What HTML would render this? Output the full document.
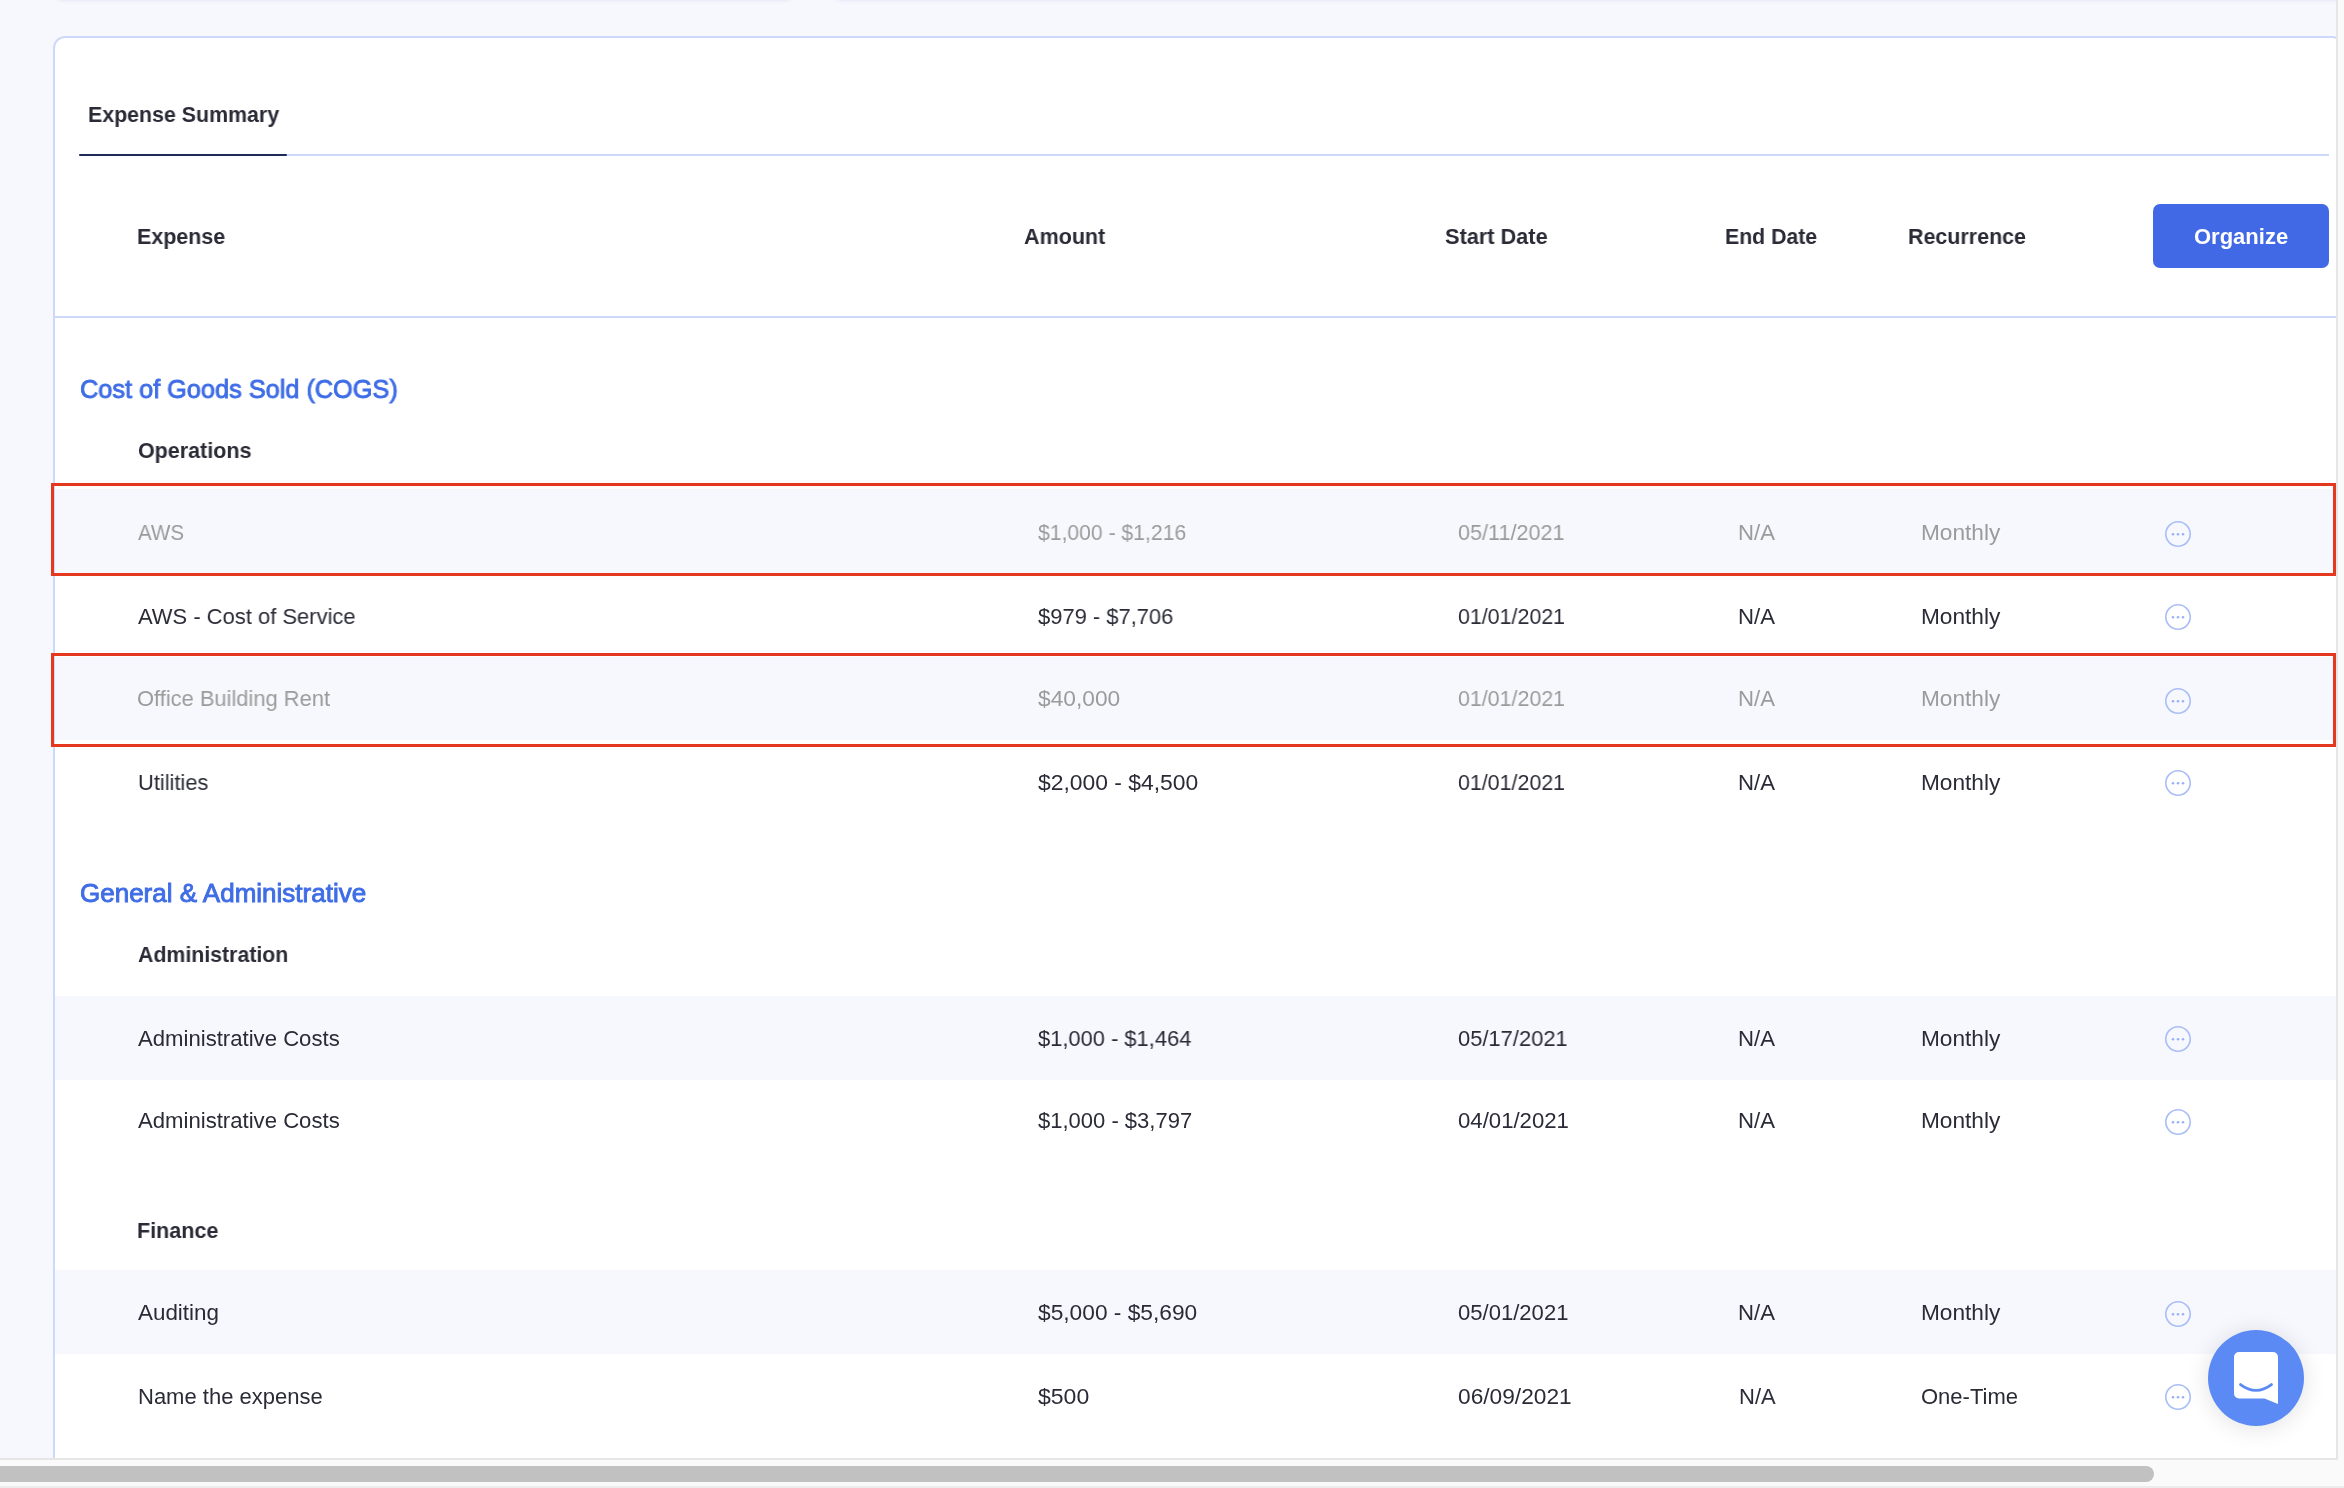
<!DOCTYPE html>
<html><head><meta charset="utf-8"><title>Expense Summary</title>
<style>
html,body{margin:0;padding:0;overflow:hidden}
body{width:2344px;height:1488px;overflow:hidden;position:relative;background:#f7f8fd;font-family:"Liberation Sans",sans-serif;font-size:22px;line-height:22px}
.t{position:absolute;white-space:nowrap;transform-origin:0 0;will-change:transform}
.topshadow{position:absolute;top:-30px;height:30px;background:#f7f8fd;box-shadow:0 0 4px rgba(140,160,230,0.25)}
.card{position:absolute;left:53px;top:36px;width:2291px;height:1452px;background:#fff;border:2px solid #cdd8fa;border-radius:12px;box-sizing:border-box}
.line{position:absolute;background:#cdd8fa}
.tabact{position:absolute;left:79px;top:154px;width:208px;height:2px;background:#1d2d58;border-radius:1px}
.btn{position:absolute;left:2153px;top:204px;width:176px;height:64px;background:#4169e5;border-radius:7px}
.rowbg{position:absolute;left:55px;width:2281px;background:#f7f8fd}
.redbox{position:absolute;left:51px;width:2285px;border:3px solid #e5391f;box-sizing:border-box}
.ic{position:absolute;left:2164px}
.vscroll{position:absolute;left:2336px;top:0;width:8px;height:1458px;background:#f9f9f9;border-left:2px solid #e6e6e6;box-sizing:border-box}
.hscroll{position:absolute;left:0;top:1458px;width:2338px;height:30px;background:#fafafa;border-top:2px solid #e6e6e6;box-sizing:border-box}
.thumb{position:absolute;left:0;top:1466px;width:2154px;height:16px;background:#c1c1c1;border-radius:0 8px 8px 0}
.hbottom{position:absolute;left:0;top:1486px;width:2344px;height:2px;background:#ececec}
.chat{position:absolute;left:2208px;top:1330px;width:96px;height:96px;border-radius:50%;background:#5b8af5;box-shadow:0 2px 24px rgba(0,0,0,0.12)}
</style></head><body>
<div class="topshadow" style="left:58px;width:732px"></div>
<div class="topshadow" style="left:838px;width:1520px"></div>
<div class="card"></div>
<div class="line" style="left:79px;top:154px;width:2250px;height:2px"></div>
<div class="tabact"></div>
<div class="line" style="left:55px;top:316px;width:2281px;height:2px"></div>
<div class="btn"></div>
<div class="rowbg" style="top:489px;height:84px"></div>
<div class="rowbg" style="top:657px;height:83px"></div>
<div class="rowbg" style="top:996px;height:84px"></div>
<div class="rowbg" style="top:1270px;height:84px"></div>
<div class="redbox" style="top:483px;height:93px"></div>
<div class="redbox" style="top:653px;height:94px"></div>
<div class="t" style="left:87.63px;top:104px;font-weight:700;color:#2a2b36;transform:scaleX(0.9708);">Expense Summary</div>
<div class="t" style="left:137.23px;top:226px;font-weight:700;color:#2a2b36;transform:scaleX(0.9747);">Expense</div>
<div class="t" style="left:1024.30px;top:226px;font-weight:700;color:#2a2b36;transform:scaleX(0.9777);">Amount</div>
<div class="t" style="left:1444.80px;top:226px;font-weight:700;color:#2a2b36;transform:scaleX(0.9876);">Start Date</div>
<div class="t" style="left:1724.93px;top:226px;font-weight:700;color:#2a2b36;transform:scaleX(0.9669);">End Date</div>
<div class="t" style="left:1907.93px;top:226px;font-weight:700;color:#2a2b36;transform:scaleX(0.9747);">Recurrence</div>
<div class="t" style="left:2193.60px;top:226px;font-weight:700;color:#ffffff;">Organize</div>
<div class="t" style="left:80.21px;top:376px;font-size:26px;line-height:26px;-webkit-text-stroke:0.9px #3f6de6;color:#3f6de6;transform:scaleX(0.9731);">Cost of Goods Sold (COGS)</div>
<div class="t" style="left:137.90px;top:440px;font-weight:700;color:#2a2b36;transform:scaleX(0.9767);">Operations</div>
<div class="t" style="left:80.45px;top:880px;font-size:26px;line-height:26px;-webkit-text-stroke:0.9px #3f6de6;color:#3f6de6;">General &amp; Administrative</div>
<div class="t" style="left:138.30px;top:944px;font-weight:700;color:#2a2b36;transform:scaleX(0.9684);">Administration</div>
<div class="t" style="left:136.92px;top:1220px;font-weight:700;color:#2a2b36;transform:scaleX(0.9780);">Finance</div>
<div class="t" style="left:138.00px;top:522px;color:#9b9b9b;transform:scaleX(0.9378);">AWS</div>
<div class="t" style="left:1037.60px;top:522px;color:#9b9b9b;transform:scaleX(0.9611);">$1,000 - $1,216</div>
<div class="t" style="left:1457.70px;top:522px;color:#9b9b9b;transform:scaleX(0.9821);">05/11/2021</div>
<div class="t" style="left:1738.39px;top:522px;color:#9b9b9b;transform:scaleX(1.0083);">N/A</div>
<div class="t" style="left:1920.97px;top:522px;color:#9b9b9b;transform:scaleX(1.0298);">Monthly</div>
<div class="t" style="left:137.90px;top:606px;color:#2a2b36;transform:scaleX(0.9978);">AWS - Cost of Service</div>
<div class="t" style="left:1037.60px;top:606px;color:#2a2b36;transform:scaleX(0.9967);">$979 - $7,706</div>
<div class="t" style="left:1457.70px;top:606px;color:#2a2b36;transform:scaleX(0.9720);">01/01/2021</div>
<div class="t" style="left:1738.39px;top:606px;color:#2a2b36;transform:scaleX(1.0083);">N/A</div>
<div class="t" style="left:1920.97px;top:606px;color:#2a2b36;transform:scaleX(1.0298);">Monthly</div>
<div class="t" style="left:137.11px;top:688px;color:#9b9b9b;transform:scaleX(0.9947);">Office Building Rent</div>
<div class="t" style="left:1037.60px;top:688px;color:#9b9b9b;transform:scaleX(1.0342);">$40,000</div>
<div class="t" style="left:1457.70px;top:688px;color:#9b9b9b;transform:scaleX(0.9720);">01/01/2021</div>
<div class="t" style="left:1738.39px;top:688px;color:#9b9b9b;transform:scaleX(1.0083);">N/A</div>
<div class="t" style="left:1920.97px;top:688px;color:#9b9b9b;transform:scaleX(1.0298);">Monthly</div>
<div class="t" style="left:138.01px;top:772px;color:#2a2b36;transform:scaleX(0.9914);">Utilities</div>
<div class="t" style="left:1037.60px;top:772px;color:#2a2b36;transform:scaleX(1.0397);">$2,000 - $4,500</div>
<div class="t" style="left:1457.70px;top:772px;color:#2a2b36;transform:scaleX(0.9720);">01/01/2021</div>
<div class="t" style="left:1738.39px;top:772px;color:#2a2b36;transform:scaleX(1.0083);">N/A</div>
<div class="t" style="left:1920.97px;top:772px;color:#2a2b36;transform:scaleX(1.0298);">Monthly</div>
<div class="t" style="left:137.90px;top:1028px;color:#2a2b36;transform:scaleX(1.0060);">Administrative Costs</div>
<div class="t" style="left:1037.60px;top:1028px;color:#2a2b36;transform:scaleX(0.9948);">$1,000 - $1,464</div>
<div class="t" style="left:1457.50px;top:1028px;color:#2a2b36;transform:scaleX(0.9957);">05/17/2021</div>
<div class="t" style="left:1738.39px;top:1028px;color:#2a2b36;transform:scaleX(1.0083);">N/A</div>
<div class="t" style="left:1920.97px;top:1028px;color:#2a2b36;transform:scaleX(1.0298);">Monthly</div>
<div class="t" style="left:137.90px;top:1110px;color:#2a2b36;transform:scaleX(1.0060);">Administrative Costs</div>
<div class="t" style="left:1037.60px;top:1110px;color:#2a2b36;">$1,000 - $3,797</div>
<div class="t" style="left:1457.50px;top:1110px;color:#2a2b36;transform:scaleX(1.0075);">04/01/2021</div>
<div class="t" style="left:1738.39px;top:1110px;color:#2a2b36;transform:scaleX(1.0083);">N/A</div>
<div class="t" style="left:1920.97px;top:1110px;color:#2a2b36;transform:scaleX(1.0298);">Monthly</div>
<div class="t" style="left:137.70px;top:1302px;color:#2a2b36;transform:scaleX(1.0183);">Auditing</div>
<div class="t" style="left:1037.60px;top:1302px;color:#2a2b36;transform:scaleX(1.0332);">$5,000 - $5,690</div>
<div class="t" style="left:1457.50px;top:1302px;color:#2a2b36;transform:scaleX(1.0030);">05/01/2021</div>
<div class="t" style="left:1738.39px;top:1302px;color:#2a2b36;transform:scaleX(1.0083);">N/A</div>
<div class="t" style="left:1920.97px;top:1302px;color:#2a2b36;transform:scaleX(1.0298);">Monthly</div>
<div class="t" style="left:137.80px;top:1386px;color:#2a2b36;">Name the expense</div>
<div class="t" style="left:1037.60px;top:1386px;color:#2a2b36;transform:scaleX(1.0471);">$500</div>
<div class="t" style="left:1457.50px;top:1386px;color:#2a2b36;transform:scaleX(1.0321);">06/09/2021</div>
<div class="t" style="left:1738.80px;top:1386px;color:#2a2b36;transform:scaleX(0.9972);">N/A</div>
<div class="t" style="left:1920.80px;top:1386px;color:#2a2b36;">One-Time</div>
<svg class="ic" style="top:520px" width="28" height="28" viewBox="0 0 28 28"><circle cx="14" cy="14" r="12.2" fill="none" stroke="#a9bef7" stroke-width="1.6"/><circle cx="9" cy="14.2" r="1.25" fill="#97b0f6"/><circle cx="14" cy="14.2" r="1.25" fill="#97b0f6"/><circle cx="19" cy="14.2" r="1.25" fill="#97b0f6"/></svg><svg class="ic" style="top:603px" width="28" height="28" viewBox="0 0 28 28"><circle cx="14" cy="14" r="12.2" fill="none" stroke="#a9bef7" stroke-width="1.6"/><circle cx="9" cy="14.2" r="1.25" fill="#97b0f6"/><circle cx="14" cy="14.2" r="1.25" fill="#97b0f6"/><circle cx="19" cy="14.2" r="1.25" fill="#97b0f6"/></svg><svg class="ic" style="top:687px" width="28" height="28" viewBox="0 0 28 28"><circle cx="14" cy="14" r="12.2" fill="none" stroke="#a9bef7" stroke-width="1.6"/><circle cx="9" cy="14.2" r="1.25" fill="#97b0f6"/><circle cx="14" cy="14.2" r="1.25" fill="#97b0f6"/><circle cx="19" cy="14.2" r="1.25" fill="#97b0f6"/></svg><svg class="ic" style="top:769px" width="28" height="28" viewBox="0 0 28 28"><circle cx="14" cy="14" r="12.2" fill="none" stroke="#a9bef7" stroke-width="1.6"/><circle cx="9" cy="14.2" r="1.25" fill="#97b0f6"/><circle cx="14" cy="14.2" r="1.25" fill="#97b0f6"/><circle cx="19" cy="14.2" r="1.25" fill="#97b0f6"/></svg><svg class="ic" style="top:1025px" width="28" height="28" viewBox="0 0 28 28"><circle cx="14" cy="14" r="12.2" fill="none" stroke="#a9bef7" stroke-width="1.6"/><circle cx="9" cy="14.2" r="1.25" fill="#97b0f6"/><circle cx="14" cy="14.2" r="1.25" fill="#97b0f6"/><circle cx="19" cy="14.2" r="1.25" fill="#97b0f6"/></svg><svg class="ic" style="top:1108px" width="28" height="28" viewBox="0 0 28 28"><circle cx="14" cy="14" r="12.2" fill="none" stroke="#a9bef7" stroke-width="1.6"/><circle cx="9" cy="14.2" r="1.25" fill="#97b0f6"/><circle cx="14" cy="14.2" r="1.25" fill="#97b0f6"/><circle cx="19" cy="14.2" r="1.25" fill="#97b0f6"/></svg><svg class="ic" style="top:1300px" width="28" height="28" viewBox="0 0 28 28"><circle cx="14" cy="14" r="12.2" fill="none" stroke="#a9bef7" stroke-width="1.6"/><circle cx="9" cy="14.2" r="1.25" fill="#97b0f6"/><circle cx="14" cy="14.2" r="1.25" fill="#97b0f6"/><circle cx="19" cy="14.2" r="1.25" fill="#97b0f6"/></svg><svg class="ic" style="top:1383px" width="28" height="28" viewBox="0 0 28 28"><circle cx="14" cy="14" r="12.2" fill="none" stroke="#a9bef7" stroke-width="1.6"/><circle cx="9" cy="14.2" r="1.25" fill="#97b0f6"/><circle cx="14" cy="14.2" r="1.25" fill="#97b0f6"/><circle cx="19" cy="14.2" r="1.25" fill="#97b0f6"/></svg>
<div class="chat"><svg width="96" height="96" viewBox="0 0 96 96" style="position:absolute;left:0;top:0"><path d="M26 27 a5 5 0 0 1 5 -5 h34 a5 5 0 0 1 5 5 v47 l-13.5 -5.6 h-25.5 a5 5 0 0 1 -5 -5 z" fill="#fff"/><path d="M32.5 54.6 q15.5 11.6 31 0" fill="none" stroke="#5b8af5" stroke-width="2.8" stroke-linecap="round"/></svg></div>
<div class="vscroll"></div>
<div class="hscroll"></div>
<div class="thumb"></div>
<div class="hbottom"></div>
<div style="position:absolute;left:2338px;top:1458px;width:6px;height:28px;background:#fafafa"></div>
</body></html>
